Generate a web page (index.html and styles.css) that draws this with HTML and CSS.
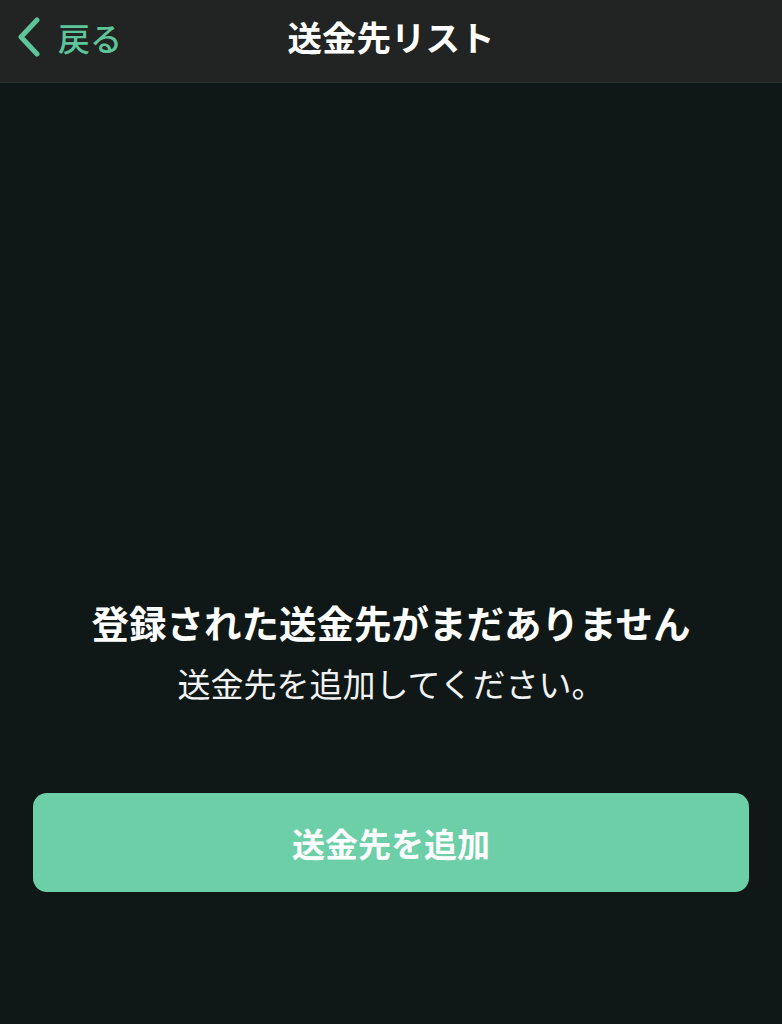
FILE: index.html
```html
<!DOCTYPE html>
<html lang="ja">
<head>
<meta charset="utf-8">
<link rel="stylesheet" href="styles.css">
</head>
<body>
<div class="page">
  <header class="nav">
    <div class="back">
      <svg class="chev" width="26" height="40" viewBox="0 0 26 40"><path d="M21 3 L5 20 L21 37" fill="none" stroke="#5ec49a" stroke-width="5" stroke-linecap="round" stroke-linejoin="round"/></svg>
      <span class="back-label">戻る</span>
    </div>
    <h1 class="title">送金先リスト</h1>
  </header>
  <main class="content">
    <div class="empty">
      <p class="empty-title">登録された送金先がまだありません</p>
      <p class="empty-sub">送金先を追加してください。</p>
    </div>
    <button class="add-btn">送金先を追加</button>
  </main>
</div>
</body>
</html>
```
FILE: styles.css
```css
html, body {
  margin: 0;
  padding: 0;
  background: #0f1816;
  font-family: "Noto Sans CJK JP", "Noto Sans", sans-serif;
}
.page {
  width: 782px;
  height: 1024px;
  display: flex;
  flex-direction: column;
}
.nav {
  height: 82px;
  background: #222424;
  border-bottom: 1px solid #2c302f;
  position: relative;
  display: flex;
  align-items: center;
  justify-content: center;
  flex-shrink: 0;
}
.back {
  position: absolute;
  left: 16px;
  top: 17px;
  display: flex;
  align-items: center;
  gap: 16px;
}
.chev { display: block; }
.back-label {
  color: #5ec49a;
  font-size: 32px;
  font-weight: 500;
  line-height: 40px;
}
.title {
  margin: 0;
  color: #ffffff;
  font-size: 34.5px;
  font-weight: 700;
  line-height: 40px;
  margin-top: -10px;
}
.content {
  display: flex;
  flex-direction: column;
  align-items: center;
  padding: 0 33px;
}
.empty {
  margin-top: 514px;
  text-align: center;
}
.empty-title {
  margin: 0;
  color: #ffffff;
  font-size: 37.5px;
  font-weight: 700;
  line-height: 50px;
}
.empty-sub {
  margin: 14px 0 0;
  color: #f2f2f2;
  font-size: 33px;
  font-weight: 400;
  line-height: 44px;
}
.add-btn {
  margin-top: 88px;
  width: 716px;
  height: 99px;
  border: none;
  border-radius: 14px;
  background: #6dcfa8;
  color: #ffffff;
  font-family: inherit;
  font-size: 33px;
  font-weight: 700;
  padding: 0;
}
```
